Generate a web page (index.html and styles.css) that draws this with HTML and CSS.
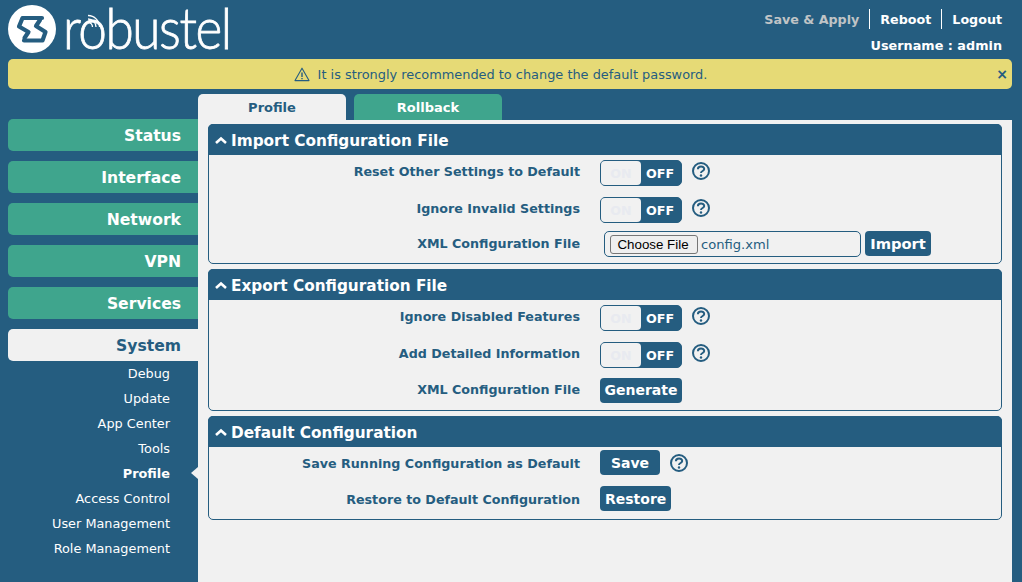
FILE: index.html
```html
<!DOCTYPE html>
<html lang="en">
<head>
<meta charset="utf-8">
<title>Robustel Profile</title>
<link rel="stylesheet" href="styles.css">
</head>
<body>
<header class="header">
  <div class="logo">
    <svg class="logo-mark" width="48" height="48" viewBox="0 0 48 48">
      <circle cx="24" cy="24" r="24" fill="#fff"/>
      <path d="M34 13H14.500L11 21.500L20.500 27L16.500 33" fill="none" stroke="#255d80" stroke-width="4.200" stroke-linejoin="round" stroke-linecap="round"/>
      <path d="M16 35.500H34.500L37.500 27L28 21L32 15" fill="none" stroke="#255d80" stroke-width="4.200" stroke-linejoin="round" stroke-linecap="round"/>
    </svg>
    <span class="wordmark">robustel</span>
    <svg class="logo-waves" width="22" height="22" viewBox="0 0 22 22">
      <path d="M2 6.500A11.500 11.500 0 0 1 13.500 18M2 10A8 8 0 0 1 10 18M2 13.500A4.500 4.500 0 0 1 6.500 18" fill="none" stroke="#fff" stroke-width="1.300"/>
    </svg>
  </div>
  <div class="header-right">
    <nav class="top-links">
      <a class="top-link muted">Save &amp; Apply</a>
      <a class="top-link">Reboot</a>
      <a class="top-link">Logout</a>
    </nav>
    <div class="username">Username : admin</div>
  </div>
</header>

<div class="banner">
  <svg class="warn" width="16" height="15" viewBox="0 0 16 15">
    <path d="M8 1.200L15 13.600H1Z" fill="none" stroke="#255d80" stroke-width="1.100" stroke-linejoin="round"/>
    <path d="M8 5.500V10M8 11V12.300" stroke="#255d80" stroke-width="1.400"/>
  </svg>
  <span>It is strongly recommended to change the default password.</span>
  <span class="banner-close">×</span>
</div>

<div class="main">
  <aside class="sidebar">
    <a class="nav-item">Status</a>
    <a class="nav-item">Interface</a>
    <a class="nav-item">Network</a>
    <a class="nav-item">VPN</a>
    <a class="nav-item">Services</a>
    <a class="nav-item active">System</a>
    <ul class="subnav">
      <li>Debug</li>
      <li>Update</li>
      <li>App Center</li>
      <li>Tools</li>
      <li class="current">Profile</li>
      <li>Access Control</li>
      <li>User Management</li>
      <li>Role Management</li>
    </ul>
  </aside>
  <main class="content-wrap">
    <div class="tabs">
      <a class="tab selected">Profile</a>
      <a class="tab">Rollback</a>
    </div>
    <div class="content">
      <section class="panel">
        <h2 class="panel-head"><svg class="chev" width="14" height="9" viewBox="0 0 14 9"><path d="M2 7L7 2.500L12 7" fill="none" stroke="#fff" stroke-width="2.600"/></svg>Import Configuration File</h2>
        <div class="panel-body">
          <div class="row toggle-row">
            <label class="row-label">Reset Other Settings to Default</label>
            <span class="toggle"><span class="on">ON</span><span class="off">OFF</span></span>
            <svg class="help" width="18" height="18" viewBox="0 0 18 18"><circle cx="9" cy="9" r="8" fill="none" stroke="#255d80" stroke-width="2"/><path d="M5.900 7.200C5.900 3.600 12.200 3.600 12.200 7.100C12.200 9.100 9 8.900 9 11" fill="none" stroke="#255d80" stroke-width="2"/><circle cx="9" cy="13.500" r="1.200" fill="#255d80"/></svg>
          </div>
          <div class="row toggle-row">
            <label class="row-label">Ignore Invalid Settings</label>
            <span class="toggle"><span class="on">ON</span><span class="off">OFF</span></span>
            <svg class="help" width="18" height="18" viewBox="0 0 18 18"><circle cx="9" cy="9" r="8" fill="none" stroke="#255d80" stroke-width="2"/><path d="M5.900 7.200C5.900 3.600 12.200 3.600 12.200 7.100C12.200 9.100 9 8.900 9 11" fill="none" stroke="#255d80" stroke-width="2"/><circle cx="9" cy="13.500" r="1.200" fill="#255d80"/></svg>
          </div>
          <div class="row file-row">
            <label class="row-label">XML Configuration File</label>
            <span class="file-box"><span class="file-btn">Choose File</span><span class="file-name">config.xml</span></span>
            <button class="btn import">Import</button>
          </div>
        </div>
      </section>
      <section class="panel">
        <h2 class="panel-head"><svg class="chev" width="14" height="9" viewBox="0 0 14 9"><path d="M2 7L7 2.500L12 7" fill="none" stroke="#fff" stroke-width="2.600"/></svg>Export Configuration File</h2>
        <div class="panel-body">
          <div class="row toggle-row">
            <label class="row-label">Ignore Disabled Features</label>
            <span class="toggle"><span class="on">ON</span><span class="off">OFF</span></span>
            <svg class="help" width="18" height="18" viewBox="0 0 18 18"><circle cx="9" cy="9" r="8" fill="none" stroke="#255d80" stroke-width="2"/><path d="M5.900 7.200C5.900 3.600 12.200 3.600 12.200 7.100C12.200 9.100 9 8.900 9 11" fill="none" stroke="#255d80" stroke-width="2"/><circle cx="9" cy="13.500" r="1.200" fill="#255d80"/></svg>
          </div>
          <div class="row toggle-row">
            <label class="row-label">Add Detailed Information</label>
            <span class="toggle"><span class="on">ON</span><span class="off">OFF</span></span>
            <svg class="help" width="18" height="18" viewBox="0 0 18 18"><circle cx="9" cy="9" r="8" fill="none" stroke="#255d80" stroke-width="2"/><path d="M5.900 7.200C5.900 3.600 12.200 3.600 12.200 7.100C12.200 9.100 9 8.900 9 11" fill="none" stroke="#255d80" stroke-width="2"/><circle cx="9" cy="13.500" r="1.200" fill="#255d80"/></svg>
          </div>
          <div class="row btn-row generate-row">
            <label class="row-label">XML Configuration File</label>
            <button class="btn generate">Generate</button>
          </div>
        </div>
      </section>
      <section class="panel">
        <h2 class="panel-head"><svg class="chev" width="14" height="9" viewBox="0 0 14 9"><path d="M2 7L7 2.500L12 7" fill="none" stroke="#fff" stroke-width="2.600"/></svg>Default Configuration</h2>
        <div class="panel-body tight">
          <div class="row btn-row">
            <label class="row-label">Save Running Configuration as Default</label>
            <button class="btn save">Save</button>
            <svg class="help" width="18" height="18" viewBox="0 0 18 18"><circle cx="9" cy="9" r="8" fill="none" stroke="#255d80" stroke-width="2"/><path d="M5.900 7.200C5.900 3.600 12.200 3.600 12.200 7.100C12.200 9.100 9 8.900 9 11" fill="none" stroke="#255d80" stroke-width="2"/><circle cx="9" cy="13.500" r="1.200" fill="#255d80"/></svg>
          </div>
          <div class="row btn-row">
            <label class="row-label">Restore to Default Configuration</label>
            <button class="btn">Restore</button>
          </div>
        </div>
      </section>
    </div>
  </main>
</div>
</body>
</html>
```

FILE: styles.css
```css
* { box-sizing: border-box; }
html, body { height: 100%; }
body {
  margin: 0;
  height: 582px;
  overflow: hidden;
  background: #255d80;
  color: #255d80;
  font-family: "DejaVu Sans", Verdana, sans-serif;
  font-size: 13px;
  display: flex;
  flex-direction: column;
}
.header {
  height: 59px;
  display: flex;
  justify-content: space-between;
  padding: 5px 20px 0 8px;
  color: #fff;
}
.logo { position: relative; display: flex; align-items: flex-start; }
.logo-mark { display: block; }
.wordmark {
  font-family: Lato, sans-serif;
  font-weight: 300;
  font-size: 57px;
  line-height: 66px;
  letter-spacing: -1.6px;
  margin-left: 7px;
  margin-top: -11px;
  transform: scaleX(0.9);
  transform-origin: left center;
  -webkit-text-stroke: 0.8px #fff;
  white-space: nowrap;
}
.logo-waves { position: absolute; left: 78px; top: 4px; }
.header-right { display: flex; flex-direction: column; align-items: flex-end; }
.top-links { display: flex; height: 20px; margin-top: 4px; }
.top-link {
  font-weight: 700;
  font-size: 12.7px;
  line-height: 21px;
  padding: 0 10px;
  border-left: 1px solid #fff;
}
.top-link:first-child { border-left: 0; }
.top-link:last-child { padding-right: 0; }
.muted { color: #c0c4c6; }
.username { font-weight: 700; font-size: 12.8px; line-height: 18px; margin-top: 8px; }
.banner {
  height: 30px;
  margin: 0 10px 0 8px;
  background: #e6da76;
  border-radius: 5px;
  display: flex;
  align-items: center;
  justify-content: center;
  gap: 8px;
  position: relative;
  font-size: 12.9px;
  padding-right: 19px;
}
.banner-close {
  position: absolute;
  right: 4px;
  top: 5px;
  font-size: 14px;
  font-weight: 700;
  line-height: 20px;
}
.main { flex: 1; display: flex; min-height: 0; padding-top: 5px; }
.sidebar {
  width: 198px;
  padding: 25px 0 0 8px;
  display: flex;
  flex-direction: column;
  align-items: stretch;
}
.nav-item {
  height: 32px;
  margin-bottom: 10px;
  background: #3fa58d;
  border-radius: 5px 0 0 5px;
  color: #fff;
  font-weight: 700;
  font-size: 15.6px;
  line-height: 34px;
  text-align: right;
  padding-right: 17px;
}
.nav-item.active { background: #f1f1f1; color: #255d80; margin-bottom: 0; }
.subnav { list-style: none; margin: 0; padding: 0; }
.subnav li {
  height: 25px;
  line-height: 25px;
  text-align: right;
  padding-right: 28px;
  color: #fff;
  font-size: 12.85px;
  position: relative;
}
.subnav .current { font-weight: 700; }
.subnav .current::after {
  content: "";
  position: absolute;
  right: 0;
  top: 6px;
  border: 6px solid transparent;
  border-left: 0;
  border-right: 7px solid #f1f1f1;
}
.content-wrap { flex: 1; display: flex; flex-direction: column; margin-right: 10px; }
.tabs { display: flex; gap: 8px; height: 26px; }
.tab {
  width: 148px;
  background: #3fa58d;
  color: #fff;
  font-weight: 700;
  font-size: 13px;
  line-height: 28px;
  text-align: center;
  border-radius: 5px 5px 0 0;
}
.tab.selected { background: #f1f1f1; color: #255d80; }
.content {
  flex: 1;
  background: #f1f1f1;
  padding: 4px 10px 0;
  display: flex;
  flex-direction: column;
  gap: 5px;
}
.panel { border: 1px solid #255d80; border-radius: 5px; }
.panel-head {
  margin: -1px -1px 0;
  height: 31px;
  background: #255d80;
  color: #fff;
  border-radius: 5px 5px 0 0;
  font-size: 15.3px;
  font-weight: 700;
  padding: 2px 0 0 6px;
  display: flex;
  align-items: center;
  gap: 3px;
}
.panel-body { padding: 5px 0 6px; display: flex; flex-direction: column; gap: 11px; }
.panel-body.tight { padding: 3px 0 8px; }
.row { display: flex; align-items: center; height: 26px; }
.row.btn-row { height: 25px; }
.file-row { margin-top: -3px; align-items: flex-start; }
.file-row .row-label { line-height: 26px; }
.generate-row { margin-top: -1px; margin-bottom: 1px; }
.generate-row .row-label { padding-bottom: 2px; }
.generate-row .btn { padding-bottom: 2px; }
.row-label {
  width: 371px;
  text-align: right;
  font-weight: 700;
  font-size: 12.7px;
  margin-right: 20px;
}
.toggle-row .row-label { padding-bottom: 4px; }
.tight .row-label { padding-top: 2px; }
.toggle {
  width: 82px;
  height: 26px;
  border-radius: 5px;
  background: #255d80;
  border: 1px solid #255d80;
  display: flex;
  font-weight: 700;
  font-size: 12.7px;
  line-height: 26px;
  text-align: center;
}
.on { width: 40px; background: #f1f1f1; color: #e8eaf0; border-radius: 4px; }
.off { flex: 1; color: #fff; padding-right: 2px; }
.help { margin: 0 0 4px 10px; flex: none; }
.tight .help { margin-bottom: 0; }
.file-box {
  width: 257px;
  height: 26px;
  margin-left: 4px;
  border: 1px solid #255d80;
  border-radius: 5px;
  display: flex;
  align-items: center;
  padding-left: 5px;
}
.file-btn {
  width: 88px;
  height: 19px;
  background: #efefef;
  border: 1px solid #767676;
  border-radius: 3px;
  color: #000;
  font-family: "Liberation Sans", Arial, sans-serif;
  font-size: 13.33px;
  line-height: 17px;
  text-align: center;
  padding-right: 2px;
}
.file-name { margin-left: 3px; font-size: 13.1px; }
.btn {
  height: 25px;
  padding: 0 5px;
  border: 0;
  border-radius: 4px;
  background: #255d80;
  color: #fff;
  font-family: "DejaVu Sans", Verdana, sans-serif;
  font-weight: 700;
  font-size: 14px;
}
.generate { width: 82px; padding-left: 0; padding-right: 0; }
.import { margin-left: 4px; width: 66px; font-size: 14.7px; }
.save { width: 60px; }
```
